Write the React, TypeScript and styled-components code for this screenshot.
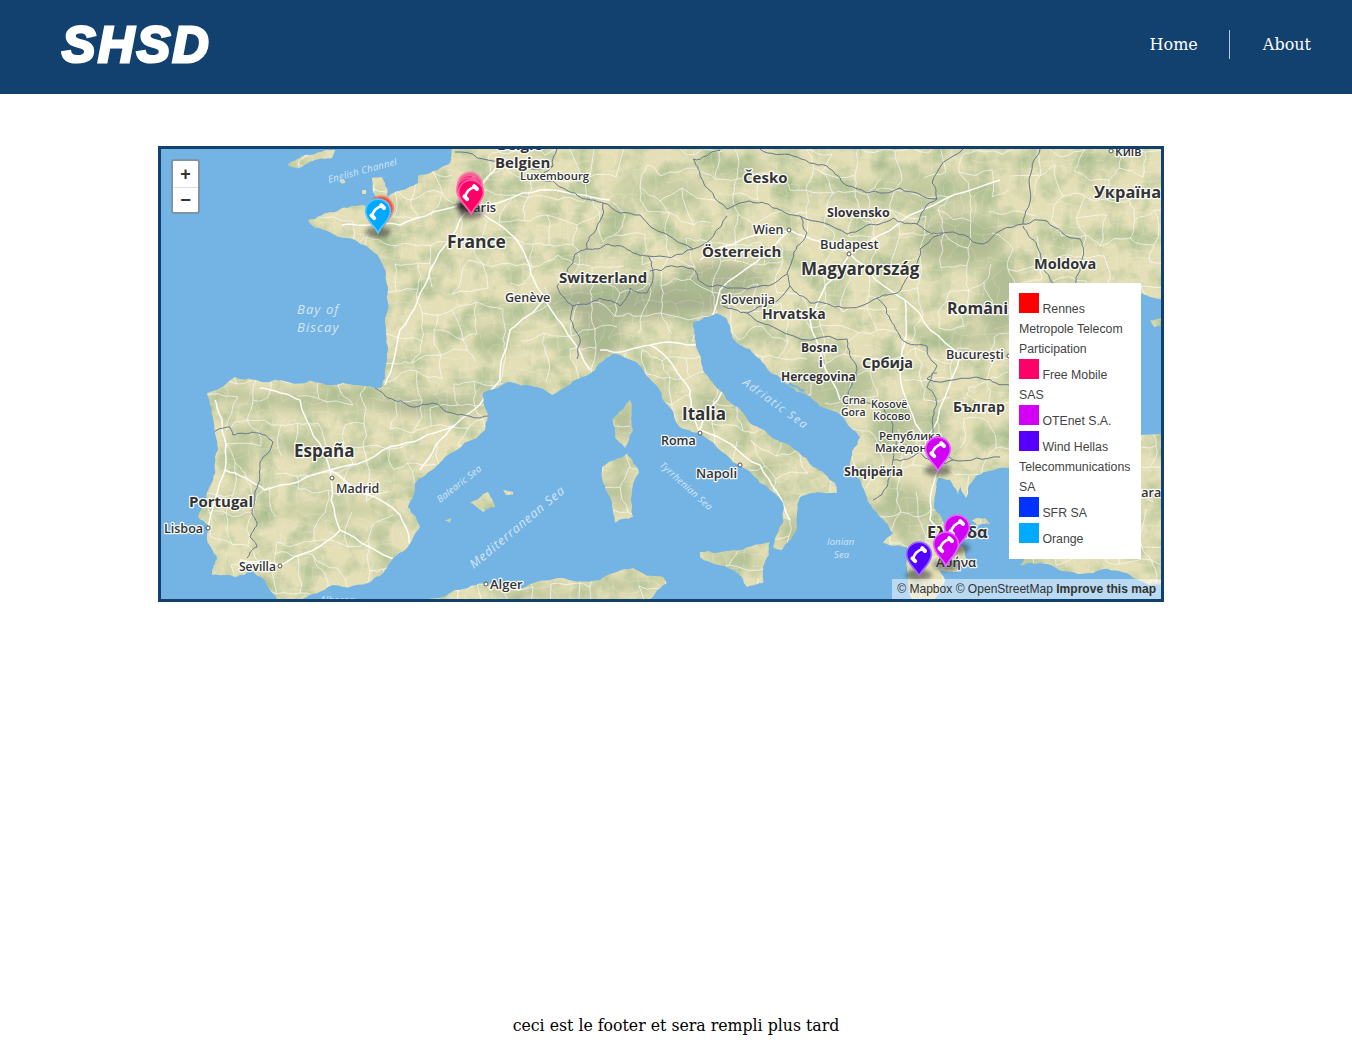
import React from 'react';
import styled, { createGlobalStyle } from 'styled-components';

const GlobalStyle = createGlobalStyle`
  html, body {
    margin: 0;
    padding: 0;
    background: #fff;
    font-family: "DejaVu Serif", serif;
  }
`;

const Page = styled.div`
  min-height: 1051px;
  display: flex;
  flex-direction: column;
`;

const Header = styled.header`
  height: 94px;
  background: #124170;
  display: flex;
  justify-content: space-between;
  padding: 0 41px 0 62px;
  box-sizing: border-box;
`;

const Logo = styled.div`
  font-family: "Liberation Sans", sans-serif;
  font-size: 50px;
  font-weight: 700;
  font-style: italic;
  letter-spacing: 2.6px;
  line-height: 39px;
  padding-top: 26px;
  color: #fff;
  -webkit-text-stroke: 3px #fff;
`;

const Nav = styled.nav`
  display: flex;
  margin-top: 30px;
  height: 29px;
`;

const NavItem = styled.a<{ $divided?: boolean }>`
  color: #fff;
  font-size: 16px;
  line-height: 29px;
  padding: 0 ${p => (p.$divided ? '31px' : '0')} 0 ${p => (p.$divided ? '0' : '33px')};
  border-right: ${p => (p.$divided ? '1px solid #b9c6d4' : 'none')};
`;

const Main = styled.main`
  padding: 52px 0 0 158px;
`;

const MapBox = styled.div`
  position: relative;
  width: 1000px;
  height: 450px;
  border: 3px solid #124170;
  overflow: hidden;
  background: #73b4e4;
`;

const MapDrawing = styled.svg`
  display: block;
  width: 1000px;
  height: 450px;
`;

const MapLabel = styled.text<{ $size: number; $weight: number }>`
  font-family: "Open Sans", sans-serif;
  font-size: ${p => p.$size}px;
  font-weight: ${p => p.$weight};
  fill: #333;
  stroke: rgba(255, 255, 255, 0.92);
  stroke-width: 2.6px;
  paint-order: stroke;
  stroke-linejoin: round;
`;

const SeaLabel = styled.text<{ $size: number; $spacing: number }>`
  font-family: "Open Sans", sans-serif;
  font-size: ${p => p.$size}px;
  font-style: italic;
  letter-spacing: ${p => p.$spacing}px;
  fill: #d3e6f4;
`;

const ZoomControl = styled.div`
  position: absolute;
  top: 10px;
  left: 10px;
  width: 25px;
  border: 2px solid rgba(60, 90, 120, 0.65);
  border-radius: 3px;
  background: #fff;
`;

const ZoomButton = styled.div<{ $top?: boolean }>`
  height: ${p => (p.$top ? '26px' : '25px')};
  font-family: "Liberation Sans", sans-serif;
  font-size: 18px;
  font-weight: 700;
  line-height: 26px;
  text-align: center;
  color: #333;
  border-bottom: ${p => (p.$top ? '1px solid #ddd' : 'none')};
  margin-bottom: ${p => (p.$top ? '-1px' : '0')};
`;

const Legend = styled.div`
  position: absolute;
  top: 134px;
  left: 848px;
  width: 112px;
  padding: 10px;
  background: #fff;
  font-family: "Liberation Sans", sans-serif;
  font-size: 12.3px;
  line-height: 20px;
  color: #444;
`;

const Swatch = styled.i<{ $color: string }>`
  display: inline-block;
  width: 20px;
  height: 20px;
  background: ${p => p.$color};
`;

const Attribution = styled.div`
  position: absolute;
  right: 0;
  bottom: 0;
  padding: 0 5px;
  height: 20px;
  line-height: 20px;
  background: rgba(255, 255, 255, 0.5);
  font-family: "Liberation Sans", sans-serif;
  font-size: 12.05px;
  color: #333;
  white-space: nowrap;
`;

const Improve = styled.b`
  font-weight: 700;
`;

const Footer = styled.footer`
  margin-top: auto;
  padding-bottom: 15px;
  text-align: center;
  font-size: 15.75px;
  line-height: 20px;
  color: #000;
`;

// seeded so the map is the same on every load
function makeRandom(seed: number) {
  let s = seed;
  return () => {
    s = (s + 0x6d2b79f5) | 0;
    let t = Math.imul(s ^ (s >>> 15), 1 | s);
    t = (t + Math.imul(t ^ (t >>> 7), 61 | t)) ^ t;
    return ((t ^ (t >>> 14)) >>> 0) / 4294967296;
  };
}

function buildRoads(step: number, keep: number, seed: number) {
  const rnd = makeRandom(seed);
  const cols = Math.ceil(1000 / step) + 2;
  const rows = Math.ceil(450 / step) + 2;
  const pts: [number, number][][] = [];
  for (let c = 0; c < cols; c++) {
    pts[c] = [];
    for (let r = 0; r < rows; r++) {
      pts[c][r] = [
        Math.round(161 + c * step + (rnd() - 0.5) * step * 0.75),
        Math.round(149 + r * step + (rnd() - 0.5) * step * 0.75),
      ];
    }
  }
  let d = '';
  for (let c = 0; c < cols; c++) {
    for (let r = 0; r < rows; r++) {
      const [x, y] = pts[c][r];
      if (c + 1 < cols && rnd() < keep) d += `M${x} ${y}L${pts[c + 1][r][0]} ${pts[c + 1][r][1]}`;
      if (r + 1 < rows && rnd() < keep) d += `M${x} ${y}L${pts[c][r + 1][0]} ${pts[c][r + 1][1]}`;
    }
  }
  return d;
}

const inFrame = (p: number[]) => p[0] > 155 && p[0] < 1165 && p[1] > 145 && p[1] < 603;

// breaks straight segments into a natural looking wiggle
function roughen(d: string, amount: number, levels: number, seed: number) {
  const rnd = makeRandom(seed);
  return d
    .split('M')
    .filter(Boolean)
    .map(sub => {
      const closed = sub.endsWith('Z');
      let pts = sub.replace('Z', '').split('L').map(p => p.trim().split(' ').map(Number));
      if (closed) pts.push(pts[0]);
      for (let l = 0; l < levels; l++) {
        const next = [pts[0]];
        for (let i = 0; i + 1 < pts.length; i++) {
          const a = pts[i];
          const b = pts[i + 1];
          if (inFrame(a) && inFrame(b)) {
            const dx = b[0] - a[0];
            const dy = b[1] - a[1];
            const k = (rnd() - 0.5) * amount;
            next.push([(a[0] + b[0]) / 2 - dy * k, (a[1] + b[1]) / 2 + dx * k]);
          }
          next.push(b);
        }
        pts = next;
      }
      return 'M' + pts.map(p => `${p[0].toFixed(1)} ${p[1].toFixed(1)}`).join('L') + (closed ? 'Z' : '');
    })
    .join('');
}

const minorRoads = roughen(buildRoads(11, 0.55, 11), 0.3, 1, 3);
const mediumRoads = roughen(buildRoads(23, 0.62, 5), 0.3, 2, 4);

const majorRoads = [
  'M470 205L400 225L342 225M470 205L430 270L400 330L385 385M470 205L520 245L545 300L590 370M470 205L540 190L610 200',
  'M470 205L500 160M545 300L510 330L500 380L455 425',
  'M455 425L400 445L330 470L265 490L225 470M330 470L300 400L260 388M330 470L340 530L280 566L240 560M330 470L400 515L410 545',
  'M225 470L222 420L215 400M225 470L208 528M340 530L400 560M455 425L420 470',
  'M600 350L650 345L700 345L740 345L700 430L760 465L790 520M650 345L690 390L700 433M740 345L770 420L830 480',
  'M700 260L790 230L850 254L905 300L960 355M850 254L910 215L1000 180M850 254L810 320L840 400M790 230L720 290L700 345',
  'M905 300L900 370L925 440L938 470L930 520L960 545M925 440L960 355',
];

const seaPath = [
  // Atlantic and the Channel
  'M120 120L452 120L452 149L450 163L433 171L418 176L418 183L402 190L388 197L385 183L382 177L372 178L375 195L377 207L362 205L342 208L322 215L308 220L315 228L335 235L355 240L368 247L383 265L388 290L385 320L388 350L382 387L375 388L332 385L288 382L262 382L235 377L227 383L207 393L210 405L215 433L218 450L213 480L198 517L210 527L207 540L217 557L212 575L235 577L252 570L265 580L277 599L277 640L120 640Z',
  // Cornwall
  'M287 165L300 158L315 154L335 150L332 158L315 160L300 168Z',
  'M340 180L344 179L345 183L341 183Z',
  'M362 190L366 190L366 194L362 194Z',
  // Mediterranean, Tyrrhenian, Ionian, Adriatic
  'M298 599L328 587L368 583L388 565L405 550L420 527L408 507L415 483L432 470L445 457L485 430L488 417L483 393L508 382L535 387L552 395L588 375L613 354L640 366L650 379L663 400L680 427L700 433L733 462L760 483L783 503L783 523L773 547L782 550L797 527L800 497L817 492L837 493L835 483L813 467L780 442L767 433L743 413L723 393L703 370L697 349L693 323L717 313L727 319L737 343L760 359L783 380L813 400L843 417L860 437L850 467L867 498L880 517L893 533L883 543L907 547L907 567L912 599L912 640L298 640Z',
  // Balearics, Corsica, Sardinia
  'M470 503L488 492L495 507L483 512Z',
  'M503 490L513 492L513 495L506 495Z',
  'M445 520L452 518L450 523Z',
  'M612 420L622 410L630 400L633 430L625 448L615 437Z',
  'M602 467L627 453L639 473L633 517L615 523L610 497Z',
  // Sicily
  'M700 552L733 550L770 542L763 567L763 583L747 587L733 570L700 557Z',
  // North Africa
  'M428 599L455 590L488 583L558 578L600 580L633 568L663 577L667 583L650 599L650 630L428 630Z',
  // Adriatic islands
  'M790 382L805 390L803 392L788 385Z',
  // Aegean
  'M935 599L945 580L940 570L958 572L966 560L963 547L955 540L942 520L934 508L936 490L938 478L950 480L952 483L958 495L961 486L966 498L969 485L978 475L1000 468L1030 460L1040 500L1035 540L1020 565L1040 563L1070 572L1100 570L1130 575L1161 585L1200 585L1200 640L935 640Z',
  'M972 520L985 518L990 524L978 526Z',
  // Black Sea
  'M1141 293L1150 297L1200 308L1200 431L1141 435L1120 420L1120 300Z',
  'M1150 320L1161 318L1161 326L1154 327Z',
].join('');

const roughSea = roughen(seaPath, 0.22, 3, 21);

const borders = [
  'M455 152L500 160L553 166L540 179L563 188L587 199L603 203L590 236L587 249L575 254L573 263L557 286L573 306L570 319L580 343L577 359',
  'M553 166L557 149M603 203L640 215L693 249M693 159L700 176L727 209L757 203L773 208L800 216',
  'M587 249L608 244L633 253L648 256L653 273L647 293L630 288L620 306L600 298L573 306',
  'M648 256L693 249L727 216M650 271L693 269L707 286L747 289L787 274',
  'M693 159L720 150M800 216L847 234L880 224L893 218L917 224L937 199L932 183L963 149M793 156L827 166L843 183L867 193L900 188L937 199M760 149L793 156',
  'M800 216L807 233L797 246L787 273L790 286L810 303L843 308L877 298L897 293L913 273L920 249L943 233L983 244L1023 224L1047 221L1080 239L1083 256L1075 285',
  'M917 224L937 234L943 233M1023 226L1037 246L1050 279L1060 293',
  'M723 306L747 313L790 286M747 313L777 329L847 339L857 369L848 395L843 417',
  'M877 298L890 319L907 343L927 346L937 366L927 379L983 379L1009 385M937 373L933 373L927 387L937 403L933 433L947 453L953 460L1000 457',
  'M860 400L880 405L893 425L893 460L887 487L873 500M893 460L920 452L937 463L953 460',
  'M375 388L388 398L412 407L432 403L452 413L475 418L488 416',
  'M214 432L230 427L233 435L252 432L265 435L273 442L260 462L260 480L255 500L252 513L257 522L250 537L257 547L247 558',
  'M1040 149L1030 190L1023 224',
].join('');

const roughBorders = roughen(borders, 0.25, 3, 31);
const roughMajor = roughen(majorRoads.join(''), 0.14, 3, 41);

const mountains: [number, number, number, number, string][] = [
  [640, 300, 95, 18, '#7f9274'], [720, 280, 45, 18, '#8b9c7c'], [600, 330, 22, 30, '#8b9c7c'],
  [430, 405, 60, 9, '#8b9c7c'], [320, 400, 70, 11, '#a5b48a'], [330, 510, 55, 7, '#b3bf92'],
  [300, 445, 30, 8, '#a5b48a'], [640, 390, 24, 10, '#a5b48a'],
  [960, 240, 45, 26, '#93a67e'], [1000, 300, 22, 40, '#98a982'], [960, 340, 40, 8, '#a5b48a'],
  [940, 190, 60, 18, '#b0bd91'], [830, 385, 45, 26, '#a3b389'], [890, 430, 20, 26, '#9fb085'],
  [905, 510, 22, 26, '#a3b389'], [920, 420, 20, 10, '#a5b48a'],
  [720, 400, 32, 9, '#a8b78d'], [770, 465, 20, 9, '#b3bf92'], [790, 530, 9, 16, '#a5b48a'],
  [615, 230, 10, 24, '#a5b48a'], [585, 250, 9, 18, '#a9b78e'], [495, 340, 22, 18, '#b3bf92'],
  [660, 190, 45, 15, '#b7c397'], [740, 170, 28, 12, '#b0bd91'], [860, 195, 28, 11, '#adba8f'],
  [625, 425, 9, 15, '#97a885'], [620, 490, 10, 22, '#a8b68f'],
  [745, 560, 18, 7, '#b3bf92'], [630, 585, 28, 5, '#a3b389'], [540, 595, 45, 5, '#a5b48a'],
  [235, 395, 18, 8, '#a5b48a'], [240, 450, 13, 26, '#b0bd91'], [1000, 560, 10, 4, '#a5b48a'],
];

const labels: [string, number, number, number, number][] = [
  ['België', 497, 150, 15, 700],
  ['Belgien', 495, 168, 15, 700],
  ['Luxembourg', 520, 180, 11.3, 600],
  ['Paris', 465, 212, 13, 600],
  ['France', 447, 248, 17.5, 700],
  ['Switzerland', 559, 283, 15, 700],
  ['Genève', 505, 302, 12.5, 600],
  ['Česko', 743, 183, 15, 700],
  ['Slovensko', 827, 217, 12.5, 700],
  ['Wien', 753, 234, 12.5, 600],
  ['Budapest', 820, 249, 12.8, 600],
  ['Österreich', 702, 257, 15, 700],
  ['Magyarország', 801, 275, 17, 700],
  ['Slovenija', 721, 304, 12.5, 600],
  ['Hrvatska', 762, 319, 14, 700],
  ['Bosna', 801, 352, 12, 700],
  ['i', 819, 367, 12, 700],
  ['Hercegovina', 781, 381, 12, 700],
  ['Србија', 862, 368, 14.5, 700],
  ['București', 946, 359, 12.6, 600],
  ['România', 947, 314, 16, 700],
  ['Moldova', 1034, 269, 14.5, 700],
  ['Україна', 1094, 198, 16.4, 700],
  ['Київ', 1115, 156, 12, 600],
  ['España', 294, 457, 17, 700],
  ['Madrid', 336, 493, 12.5, 600],
  ['Portugal', 189, 507, 15, 700],
  ['Lisboa', 164, 533, 12.5, 600],
  ['Sevilla', 239, 571, 12, 600],
  ['Alger', 490, 589, 13, 600],
  ['Italia', 682, 420, 17, 700],
  ['Roma', 661, 445, 12.5, 600],
  ['Napoli', 696, 478, 13, 600],
  ['Crna', 842, 404, 10.5, 600],
  ['Gora', 841, 416, 10.5, 600],
  ['Kosovë', 871, 408, 10.5, 600],
  ['Косово', 873, 420, 10.5, 600],
  ['Република', 879, 440, 11.5, 600],
  ['Македонија', 875, 452, 11.5, 600],
  ['Shqipëria', 844, 476, 12.5, 700],
  ['Ελλάδα', 927, 538, 16.4, 700],
  ['Αθήνα', 936, 567, 13, 600],
  ['Българ', 953, 412, 14, 700],
  ['Ankara', 1118, 497, 12.5, 600],
];

const seas: [string, number, number, number, number, number][] = [
  ['Bay of', 297, 314, 13, 1.1, 0],
  ['Biscay', 297, 332, 13, 1.1, 0],
  ['English Channel', 329, 183, 9.5, 0.3, -15],
  ['Balearic Sea', 440, 503, 9.5, 0.2, -38],
  ['Mediterranean Sea', 474, 569, 12.5, 0.9, -40],
  ['Alboran', 320, 603, 9.5, 0.3, 0],
  ['Adriatic Sea', 742, 384, 11.5, 1.5, 36],
  ['Tyrrhenian Sea', 659, 466, 9.5, 0.3, 42],
  ['Ionian', 827, 545, 9.5, 0.1, 0],
  ['Sea', 834, 558, 9.5, 0.1, 0],
];

const cityDots: [number, number][] = [
  [789, 230], [849, 254], [332, 478], [208, 528], [280, 566], [486, 584], [700, 433], [740, 465], [1111, 151], [1009, 356],
];

const Pin: React.FC<{ x: number; y: number; fill: string; rim: string; opacity?: number; shadow?: boolean }> = ({
  x, y, fill, rim, opacity = 1, shadow = true,
}) => (
  <g transform={`translate(${x} ${y})`} opacity={opacity}>
    {shadow && <ellipse cx={0} cy={-1} rx={13} ry={6} fill="#333" opacity={0.5} filter="url(#soft)" />}
    <path
      d="M0 0C-3-7-12.4-13-12.4-21.5A12.4 12.4 0 1 1 12.4-21.5C12.4-13 3-7 0 0Z"
      fill={fill}
      stroke={rim}
      strokeWidth={1.6}
    />
    <path d="M-6-16.8C-5-21.6-1.4-25.6 4-27" fill="none" stroke="#fff" strokeWidth={2.6} />
    <path d="M-6.6-17.6L-3.8-14.8M3.2-27.8L6-25" stroke="#fff" strokeWidth={4} strokeLinecap="round" />
  </g>
);

const CountryMap: React.FC = () => (
  <MapDrawing viewBox="161 149 1000 450">
    <defs>
      <filter id="terrain" x="0" y="0" width="100%" height="100%" colorInterpolationFilters="sRGB">
        <feTurbulence type="fractalNoise" baseFrequency="0.04" numOctaves="4" seed="8" />
        <feColorMatrix values="0 0 0 0 0.66  0 0 0 0 0.74  0 0 0 0 0.56  2 0 0 0 -0.82" />
      </filter>
      <filter id="blur6" x="-30%" y="-30%" width="160%" height="160%">
        <feGaussianBlur stdDeviation="6" />
      </filter>
      <filter id="soft" x="-50%" y="-100%" width="200%" height="300%">
        <feGaussianBlur stdDeviation="2.2" />
      </filter>
    </defs>

    <rect x={161} y={149} width={1000} height={450} fill="#e4dfb7" />
    <g filter="url(#blur6)" opacity={0.6}>
      {mountains.map(([cx, cy, rx, ry, color], i) => (
        <ellipse key={i} cx={cx} cy={cy} rx={rx} ry={ry} fill={color} />
      ))}
    </g>
    <rect x={161} y={149} width={1000} height={450} filter="url(#terrain)" />

    <path d={minorRoads} fill="none" stroke="#fff" strokeWidth={0.5} opacity={0.35} />
    <path d={mediumRoads} fill="none" stroke="#fff" strokeWidth={0.9} opacity={0.7} />
    <path d={roughMajor} fill="none" stroke="#fff" strokeWidth={1.5} opacity={0.95} />
    <path d={roughBorders} fill="none" stroke="#66778a" strokeWidth={1} strokeLinejoin="round" />

    <path d={roughSea} fill="#73b4e4" fillRule="evenodd" />

    {seas.map(([text, x, y, size, spacing, angle]) => (
      <SeaLabel key={text} x={x} y={y} $size={size} $spacing={spacing} transform={angle ? `rotate(${angle} ${x} ${y})` : undefined}>
        {text}
      </SeaLabel>
    ))}
    {cityDots.map(([cx, cy]) => (
      <circle key={`${cx}-${cy}`} cx={cx} cy={cy} r={2} fill="#fff" stroke="#555" strokeWidth={1} />
    ))}
    {labels.map(([text, x, y, size, weight]) => (
      <MapLabel key={text} x={x} y={y} $size={size} $weight={weight}>
        {text}
      </MapLabel>
    ))}

    <ellipse cx={467} cy={206} rx={11} ry={6} fill="#111" opacity={0.85} filter="url(#soft)" />
    <Pin x={381} y={230} fill="#ff0000" rim="#ff5a5a" opacity={0.6} shadow={false} />
    <Pin x={378} y={233} fill="#00a8ff" rim="#55c6ff" />
    <Pin x={470} y={206} fill="#ff0066" rim="#ff5fa5" opacity={0.55} shadow={false} />
    <Pin x={470} y={209} fill="#ff0066" rim="#ff5fa5" opacity={0.6} shadow={false} />
    <Pin x={469} y={212} fill="#ff0066" rim="#ff5fa5" opacity={0.7} shadow={false} />
    <Pin x={471} y={214} fill="#ff0066" rim="#ff5fa5" />
    <Pin x={938} y={471} fill="#d000f0" rim="#e266fb" />
    <Pin x={957} y={549} fill="#d000f0" rim="#e266fb" />
    <Pin x={946} y={566} fill="#d000f0" rim="#e266fb" />
    <Pin x={919} y={576} fill="#5500ff" rim="#9a66ff" />
  </MapDrawing>
);

const legendItems = [
  { color: '#ff0000', name: 'Rennes Metropole Telecom Participation' },
  { color: '#ff0066', name: 'Free Mobile SAS' },
  { color: '#d400f5', name: 'OTEnet S.A.' },
  { color: '#5500ff', name: 'Wind Hellas Telecommunications SA' },
  { color: '#0033ff', name: 'SFR SA' },
  { color: '#00aaff', name: 'Orange' },
];

const App: React.FC = () => (
  <Page>
    <GlobalStyle />
    <Header>
      <Logo>SHSD</Logo>
      <Nav>
        <NavItem $divided>Home</NavItem>
        <NavItem>About</NavItem>
      </Nav>
    </Header>
    <Main>
      <MapBox>
        <CountryMap />
        <ZoomControl>
          <ZoomButton $top>+</ZoomButton>
          <ZoomButton>−</ZoomButton>
        </ZoomControl>
        <Legend>
          {legendItems.map(item => (
            <React.Fragment key={item.name}>
              <Swatch $color={item.color} /> {item.name}
              <br />
            </React.Fragment>
          ))}
        </Legend>
        <Attribution>
          © Mapbox © OpenStreetMap <Improve>Improve this map</Improve>
        </Attribution>
      </MapBox>
    </Main>
    <Footer>ceci est le footer et sera rempli plus tard</Footer>
  </Page>
);

export default App;
